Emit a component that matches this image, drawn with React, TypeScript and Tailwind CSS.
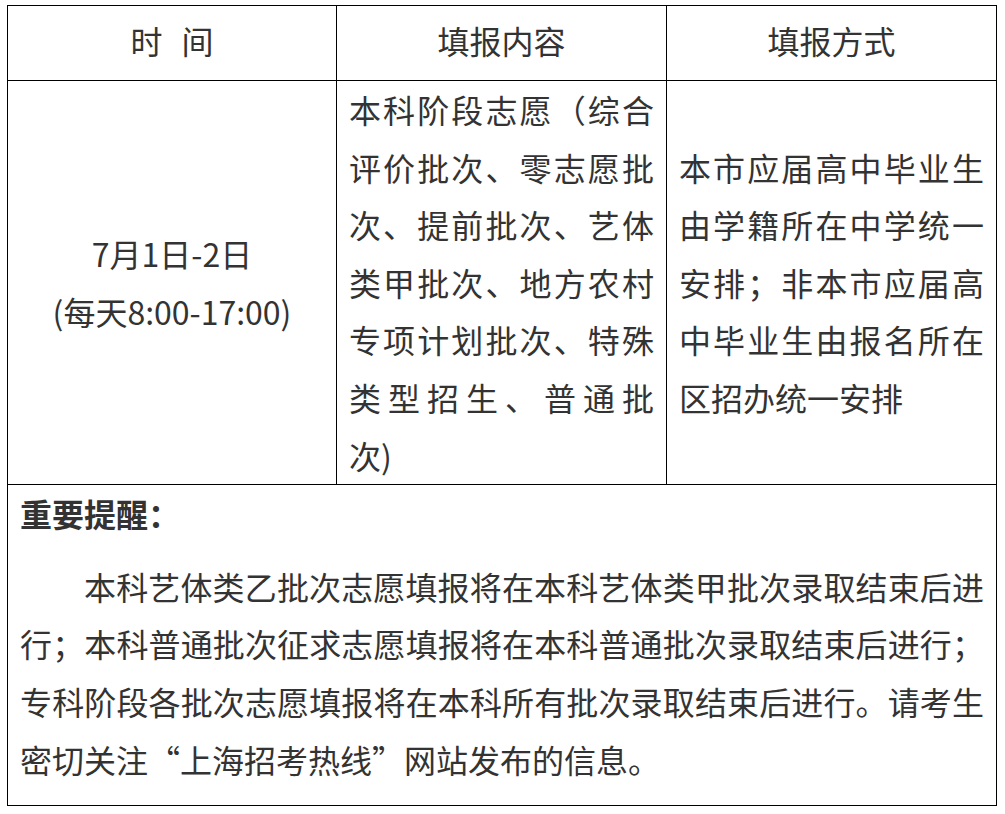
import React from 'react';

const contentLines = [
  '本科阶段志愿（综合',
  '评价批次、零志愿批',
  '次、提前批次、艺体',
  '类甲批次、地方农村',
  '专项计划批次、特殊',
  '类型招生、普通批',
  '次)',
];

const App = () => {
  return (
    <div
      lang="zh-CN"
      className="min-h-[814px] bg-white pl-[7px] pt-[5px] text-[#333] text-[32px] leading-[1.8]"
      style={{ fontFamily: '"Noto Sans CJK SC", "Noto Sans", sans-serif' }}
    >
      <table className="w-[989px] table-fixed border-collapse border border-black">
        <colgroup>
          <col className="w-[329px]" />
          <col className="w-[330px]" />
          <col className="w-[330px]" />
        </colgroup>
        <tbody>
          <tr className="h-[75px]">
            <td className="border border-black px-3 pb-[5px] text-center align-middle">
              <span className="mr-[19px]">时</span>间
            </td>
            <td className="border border-black px-3 pb-[5px] text-center align-middle">填报内容</td>
            <td className="border border-black px-3 pb-[5px] text-center align-middle">填报方式</td>
          </tr>
          <tr>
            <td className="border border-black px-3 text-center align-middle">
              7月1日-2日
              <br />
              (每天8:00-17:00)
            </td>
            <td className="border border-black px-3 align-middle">
              {contentLines.map((line, i) => (
                <div
                  key={i}
                  className={i < contentLines.length - 1 ? 'text-justify [text-align-last:justify]' : 'text-left'}
                >
                  {line}
                </div>
              ))}
            </td>
            <td className="border border-black px-3 text-justify align-middle">
              本市应届高中毕业生由学籍所在中学统一安排；非本市应届高中毕业生由报名所在区招办统一安排
            </td>
          </tr>
          <tr>
            <td colSpan={3} className="border border-black px-3 pb-[17px] align-top">
              <div className="font-bold">重要提醒：</div>
              <p className="mt-[15px] indent-[2em] text-justify">
                本科艺体类乙批次志愿填报将在本科艺体类甲批次录取结束后进行；本科普通批次征求志愿填报将在本科普通批次录取结束后进行；专科阶段各批次志愿填报将在本科所有批次录取结束后进行。请考生密切关注“上海招考热线”网站发布的信息。
              </p>
            </td>
          </tr>
        </tbody>
      </table>
    </div>
  );
};

export default App;
